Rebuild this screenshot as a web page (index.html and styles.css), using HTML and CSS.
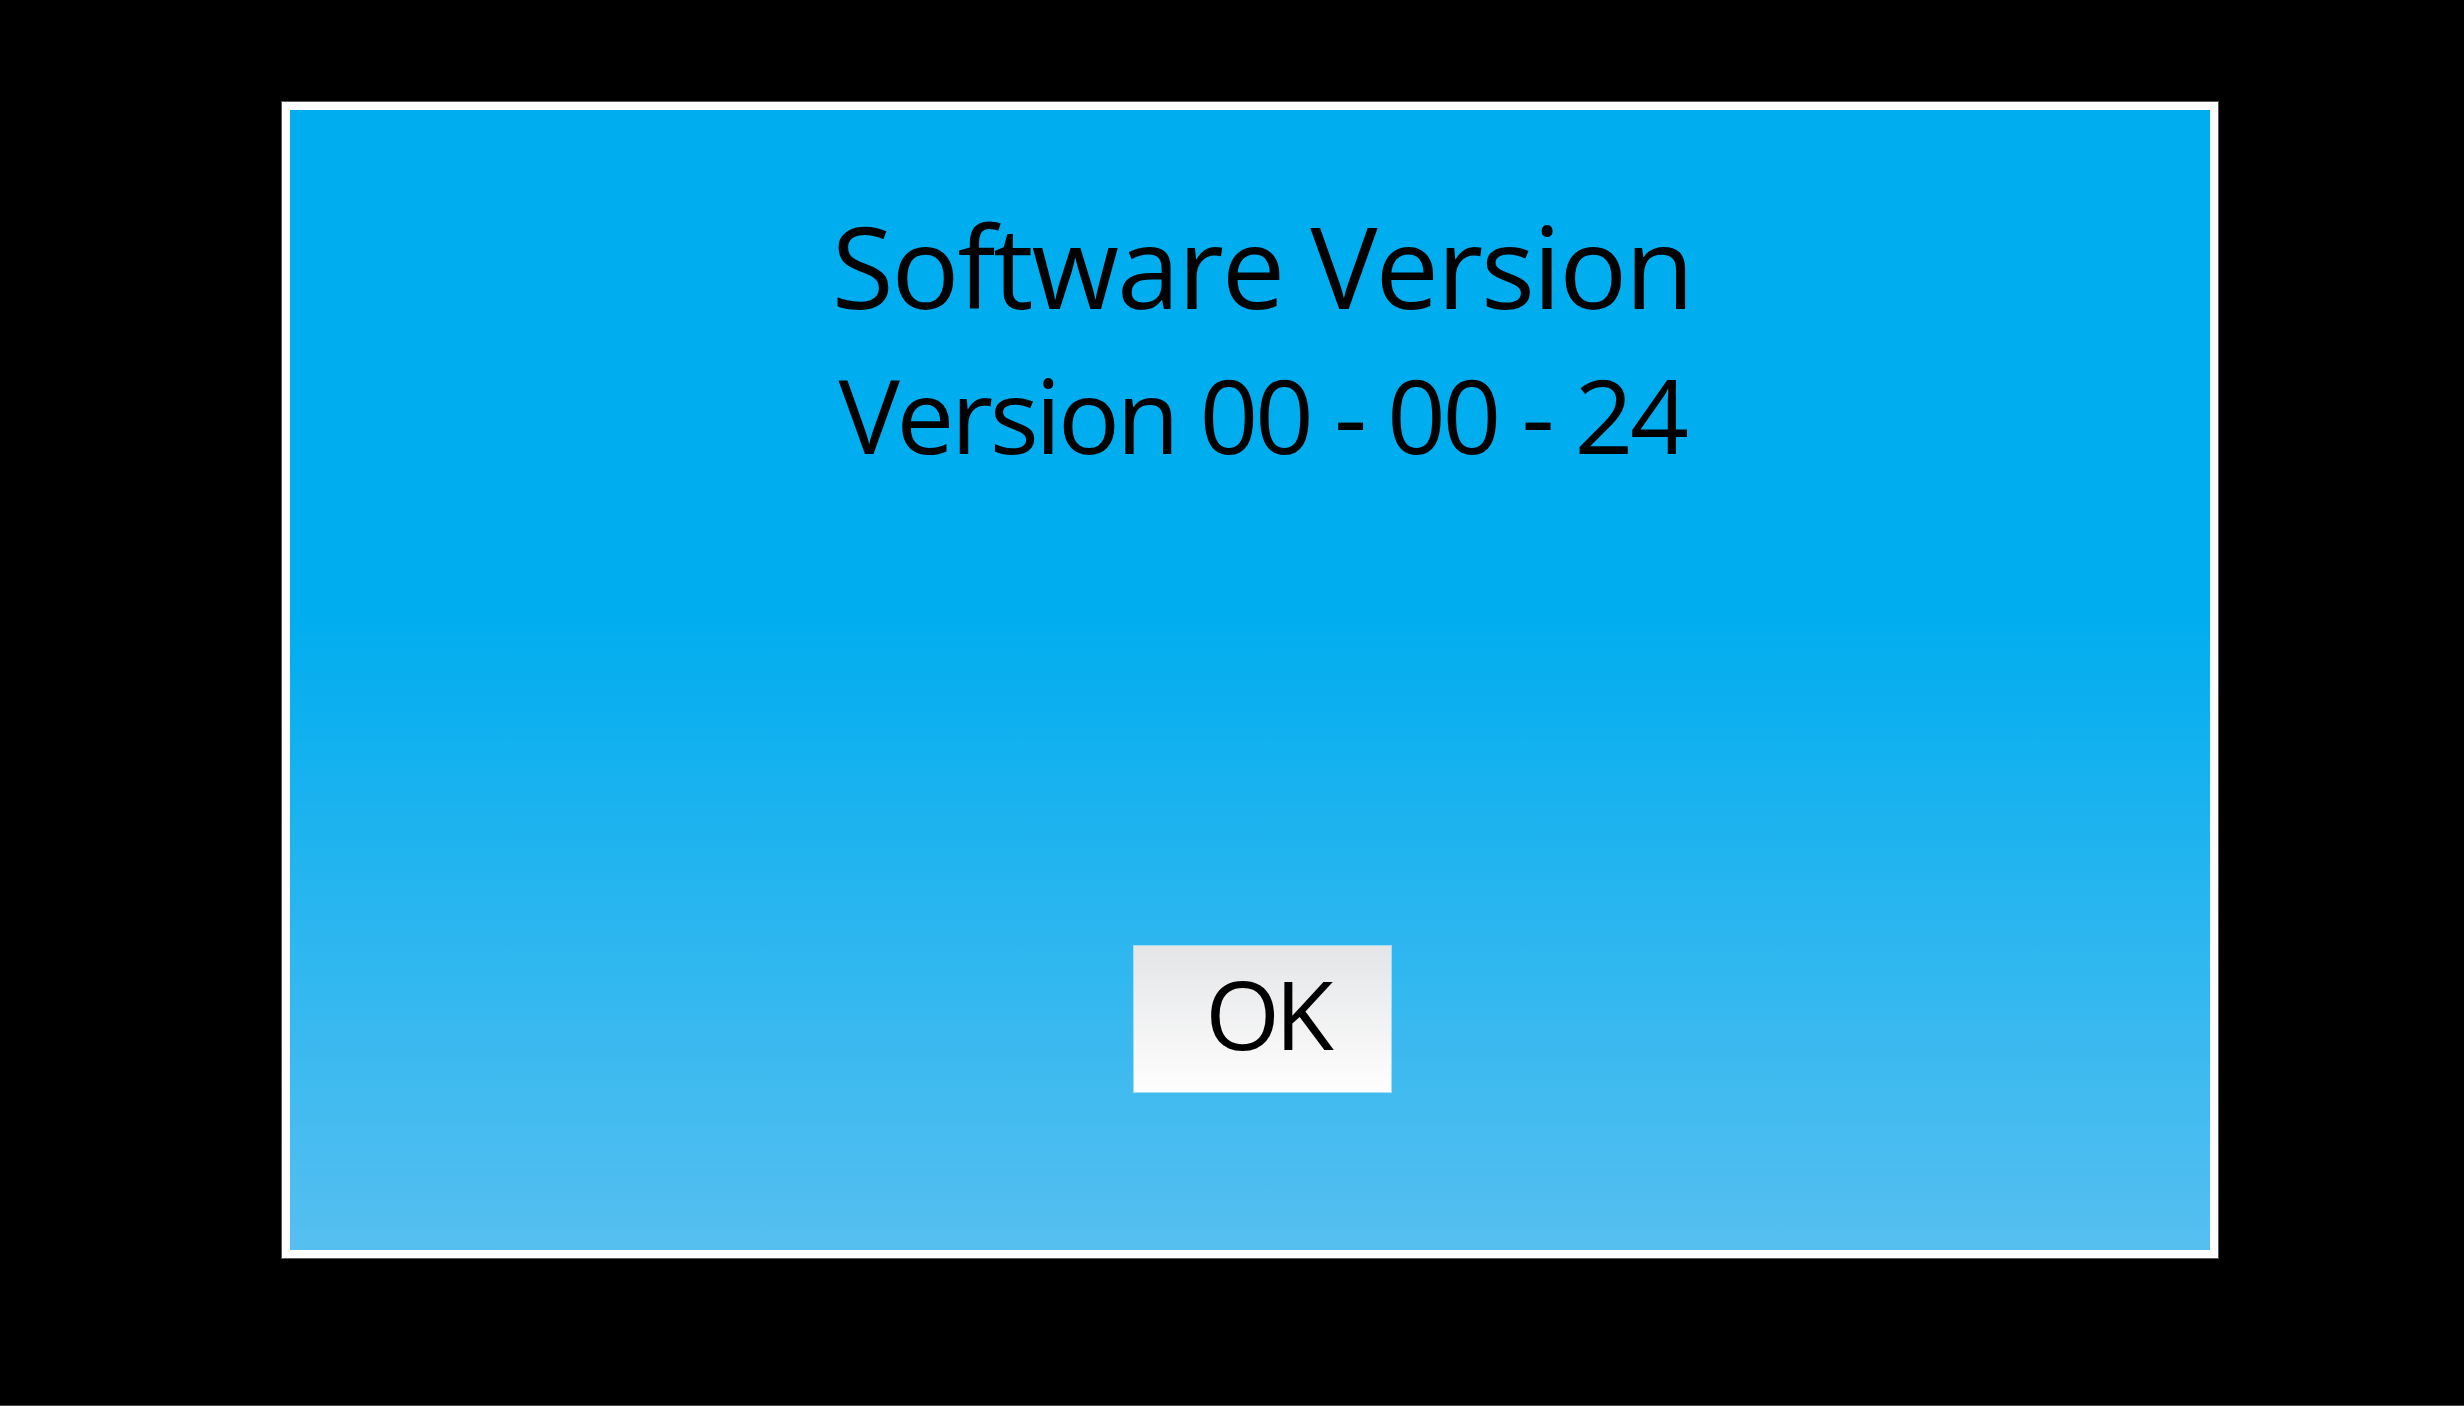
FILE: index.html
```html
<!DOCTYPE html>
<html lang="en">
<head>
<meta charset="utf-8">
<title>Software Version</title>
<link rel="stylesheet" href="styles.css">
</head>
<body>
<div class="screen">
  <div class="dialog">
    <div class="content">
      <h1 class="title">Software Version</h1>
      <p class="version">Version 00 - 00 - 24</p>
      <button class="ok-button" type="button">OK</button>
    </div>
  </div>
</div>
</body>
</html>
```

FILE: styles.css
```css
html, body {
  margin: 0;
  padding: 0;
  background: #000;
}
body {
  width: 2464px;
  height: 1406px;
  box-sizing: border-box;
  border-bottom: 1px solid #4a4a4a;
  overflow: hidden;
  font-family: "Open Sans", "Noto Sans", sans-serif;
  color: #000;
}
.screen {
  display: flex;
  align-items: flex-start;
  padding: 102px 0 0 282px;
}
.dialog {
  width: 1920px;
  height: 1140px;
  border: 8px solid #fff;
  outline: 1px solid #5a5a5a;
  background: linear-gradient(to bottom, #00adef 0%, #00adef 44%, #56bff0 100%);
  display: flex;
}
.content {
  flex: 1;
  display: flex;
  flex-direction: column;
  align-items: center;
  padding: 99px 0 157px 24px;
}
.title {
  margin: 0;
  font-size: 113px;
  font-weight: 400;
  line-height: 1;
  letter-spacing: -2.1px;
}
.version {
  margin: 41px 0 0 0;
  font-size: 103px;
  font-weight: 400;
  line-height: 1;
  letter-spacing: -3.4px;
}
.ok-button {
  margin-top: auto;
  width: 259px;
  height: 148px;
  box-sizing: border-box;
  border: 1px solid #a6daf2;
  background: linear-gradient(to bottom, #e4e5e7 0%, #fefefe 100%);
  font-family: "Open Sans", "Noto Sans", sans-serif;
  font-size: 96px;
  line-height: 1;
  letter-spacing: -5px;
  color: #000;
  padding: 0 0 12px 10px;
  display: flex;
  align-items: center;
  justify-content: center;
}
```
